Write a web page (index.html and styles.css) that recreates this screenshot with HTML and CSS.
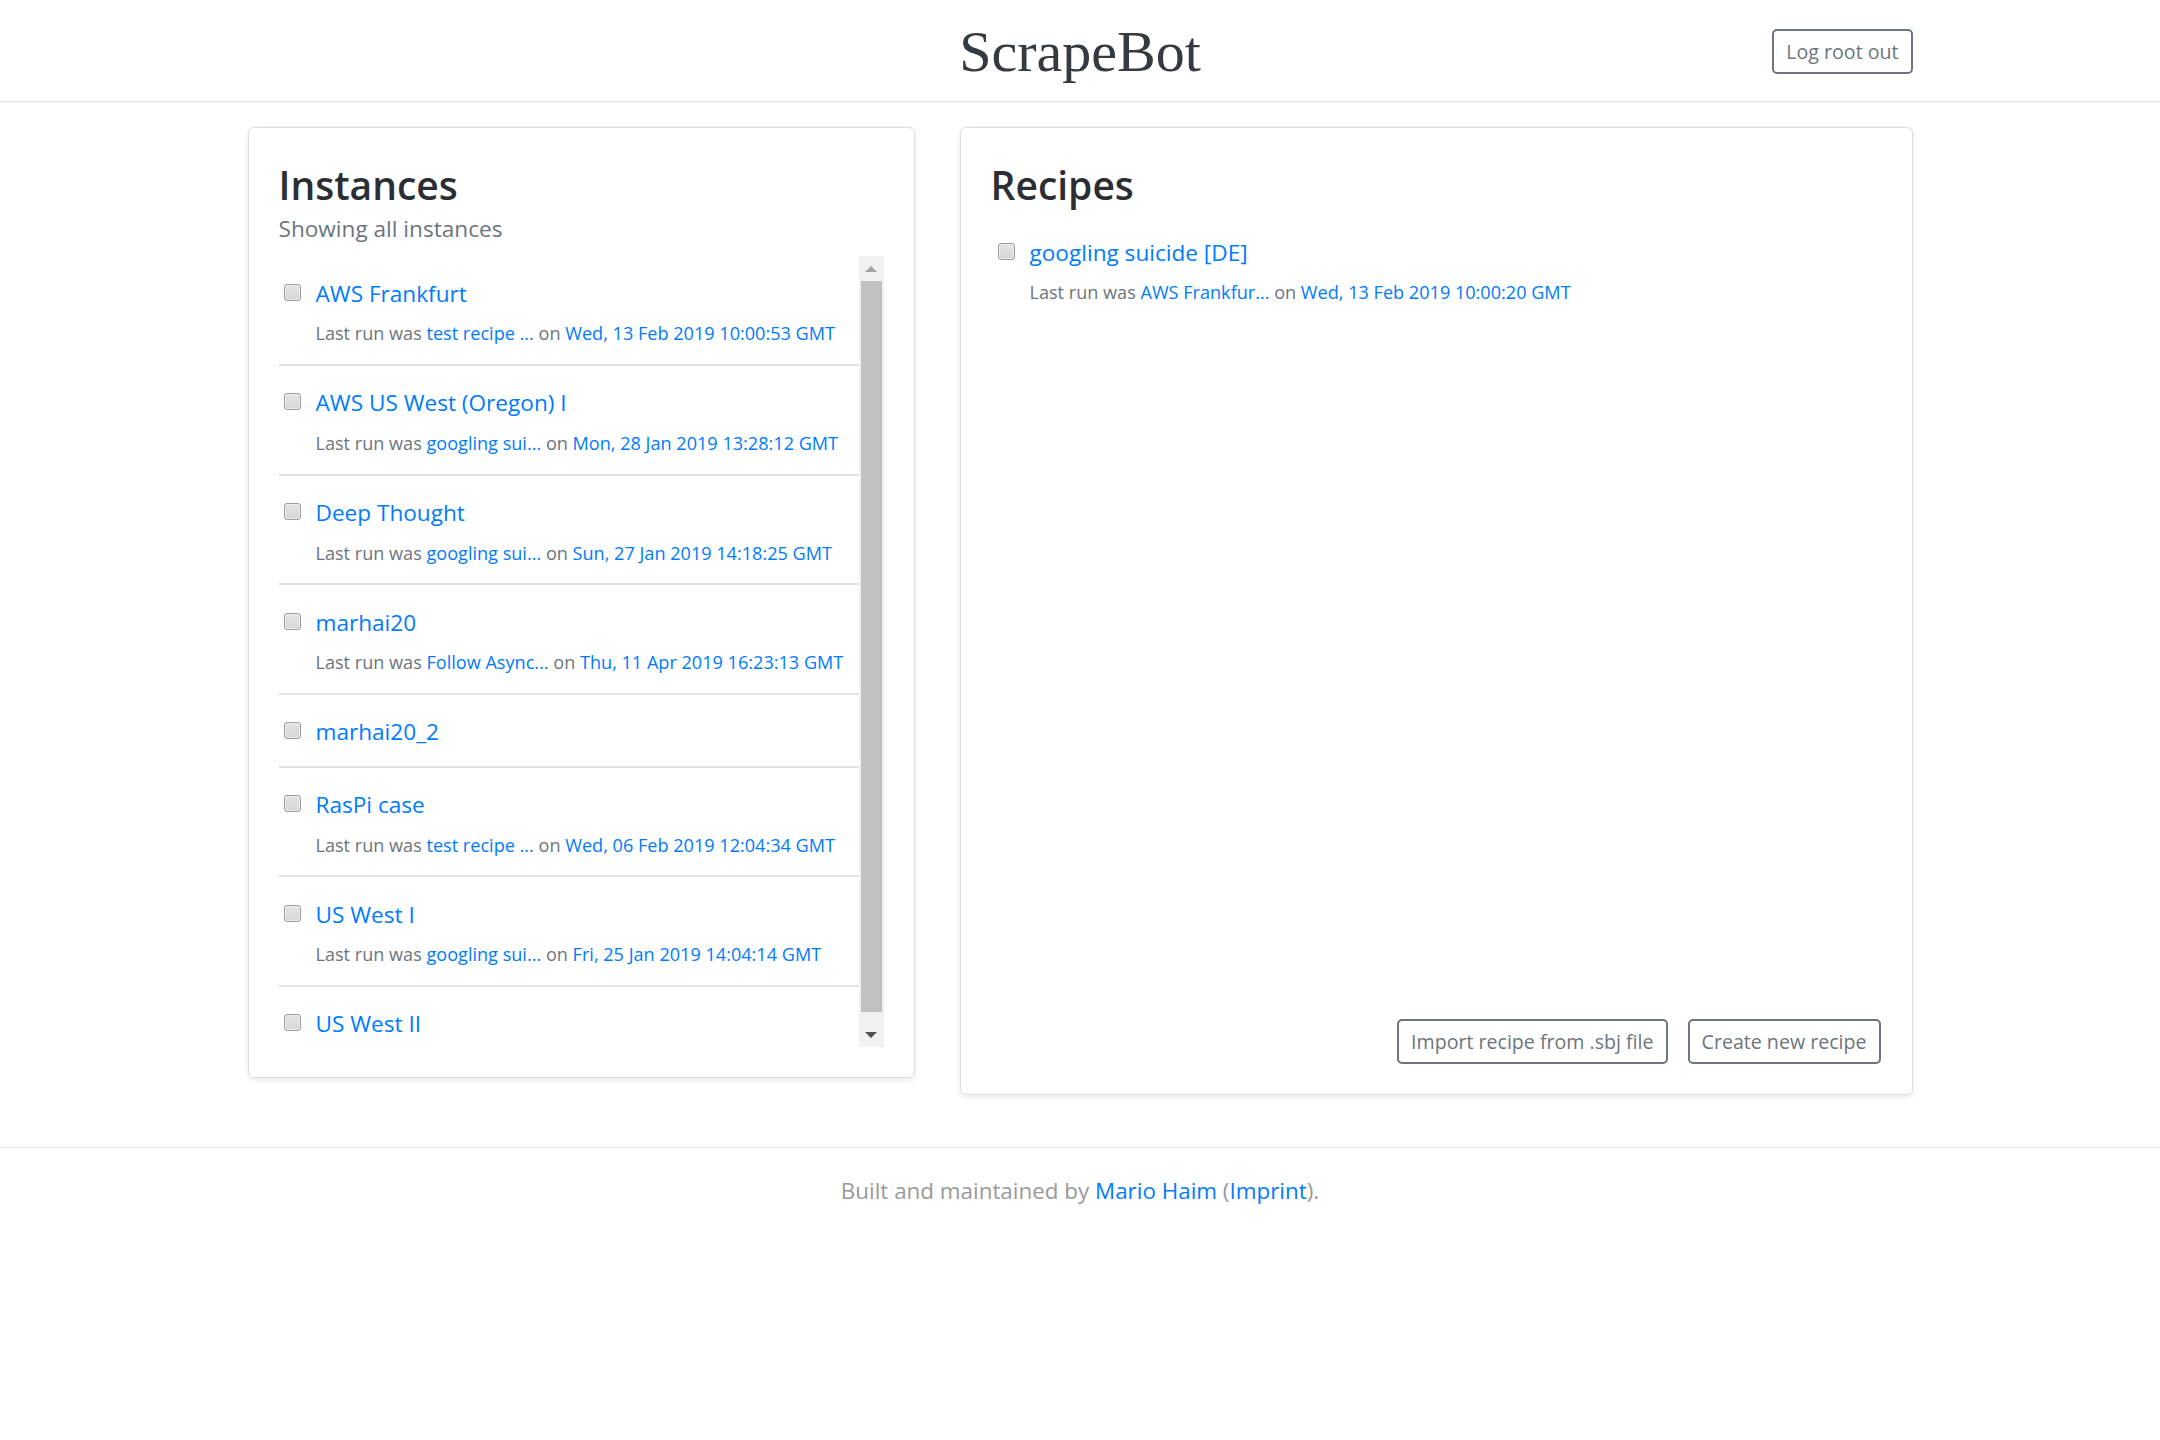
FILE: index.html
```html
<!DOCTYPE html>
<html lang="en">
<head>
<meta charset="utf-8">
<title>ScrapeBot</title>
<link rel="stylesheet" href="styles.css">
</head>
<body>
<header class="topbar">
  <div class="container topbar-inner">
    <div></div>
    <h1 class="brand">ScrapeBot</h1>
    <div class="topbar-actions"><button class="btn">Log root out</button></div>
  </div>
</header>

<main class="container main-grid">
  <section class="card">
    <div class="card-body">
      <h3 class="card-title">Instances</h3>
      <p class="card-subtitle">Showing all instances</p>
      <div class="scroll-box">
        <ul class="item-list">
          <li class="item">
            <input type="checkbox" class="check">
            <div class="item-text">
              <a class="item-title" href="#">AWS Frankfurt</a>
              <div class="item-meta">Last run was <a href="#">test recipe ...</a> on <a href="#">Wed, 13 Feb 2019 10:00:53 GMT</a></div>
            </div>
          </li>
          <li class="item">
            <input type="checkbox" class="check">
            <div class="item-text">
              <a class="item-title" href="#">AWS US West (Oregon) I</a>
              <div class="item-meta">Last run was <a href="#">googling sui...</a> on <a href="#">Mon, 28 Jan 2019 13:28:12 GMT</a></div>
            </div>
          </li>
          <li class="item">
            <input type="checkbox" class="check">
            <div class="item-text">
              <a class="item-title" href="#">Deep Thought</a>
              <div class="item-meta">Last run was <a href="#">googling sui...</a> on <a href="#">Sun, 27 Jan 2019 14:18:25 GMT</a></div>
            </div>
          </li>
          <li class="item">
            <input type="checkbox" class="check">
            <div class="item-text">
              <a class="item-title" href="#">marhai20</a>
              <div class="item-meta">Last run was <a href="#">Follow Async...</a> on <a href="#">Thu, 11 Apr 2019 16:23:13 GMT</a></div>
            </div>
          </li>
          <li class="item">
            <input type="checkbox" class="check">
            <div class="item-text">
              <a class="item-title" href="#">marhai20_2</a>
            </div>
          </li>
          <li class="item">
            <input type="checkbox" class="check">
            <div class="item-text">
              <a class="item-title" href="#">RasPi case</a>
              <div class="item-meta">Last run was <a href="#">test recipe ...</a> on <a href="#">Wed, 06 Feb 2019 12:04:34 GMT</a></div>
            </div>
          </li>
          <li class="item">
            <input type="checkbox" class="check">
            <div class="item-text">
              <a class="item-title" href="#">US West I</a>
              <div class="item-meta">Last run was <a href="#">googling sui...</a> on <a href="#">Fri, 25 Jan 2019 14:04:14 GMT</a></div>
            </div>
          </li>
          <li class="item">
            <input type="checkbox" class="check">
            <div class="item-text">
              <a class="item-title" href="#">US West II</a>
            </div>
          </li>
        </ul>
        <div class="fake-scrollbar" aria-hidden="true">
          <div class="sb-btn"><span class="arrow-up"></span></div>
          <div class="sb-track"><div class="sb-thumb"></div></div>
          <div class="sb-btn"><span class="arrow-down"></span></div>
        </div>
      </div>
    </div>
  </section>

  <section class="card">
    <div class="card-body recipes-body">
      <h3 class="card-title recipes-title">Recipes</h3>
      <ul class="item-list recipe-list">
        <li class="item">
          <input type="checkbox" class="check">
          <div class="item-text">
            <a class="item-title" href="#">googling suicide [DE]</a>
            <div class="item-meta">Last run was <a href="#">AWS Frankfur...</a> on <a href="#">Wed, 13 Feb 2019 10:00:20 GMT</a></div>
          </div>
        </li>
      </ul>
      <div class="card-actions">
        <button class="btn">Import recipe from .sbj file</button>
        <button class="btn">Create new recipe</button>
      </div>
    </div>
  </section>
</main>

<footer class="footer">
  <p>Built and maintained by <a href="#">Mario Haim</a> (<a href="#">Imprint</a>).</p>
</footer>
</body>
</html>
```
FILE: styles.css
```css
* { box-sizing: border-box; }

html, body {
  margin: 0;
  padding: 0;
  background: #fff;
}

body {
  font-family: "Open Sans", "Noto Sans", "Liberation Sans", sans-serif;
  font-size: 22.4px;
  line-height: 36px;
  color: #212529;
}

a {
  color: #007bff;
  text-decoration: none;
}

.container {
  width: 1665px;
  margin: 0 auto;
}

/* ---------- header ---------- */
.topbar {
  border-bottom: 1px solid #e3e3e3;
}

.topbar-inner {
  height: 101px;
  display: grid;
  grid-template-columns: 1fr auto 1fr;
  align-items: center;
}

.brand {
  margin: 0;
  font-family: "Liberation Serif", "Times New Roman", serif;
  font-weight: 400;
  font-size: 58px;
  line-height: 66px;
  color: #343a40;
  padding-top: 2px;
}

.topbar-actions {
  display: flex;
  justify-content: flex-end;
  padding-top: 1px;
}

.btn {
  font-family: "Open Sans", "Noto Sans", "Liberation Sans", sans-serif;
  font-size: 19.6px;
  line-height: 31px;
  padding: 5px 12px;
  color: #6c757d;
  background: #fff;
  border: 2px solid #6c757d;
  border-radius: 5px;
  cursor: pointer;
}

/* ---------- main ---------- */
.main-grid {
  display: grid;
  grid-template-columns: 667px 953px;
  column-gap: 45px;
  align-items: start;
  margin-top: 25px;
}

.card {
  background: #fff;
  border: 1px solid #dedede;
  border-radius: 6px;
  box-shadow: 0 2px 6px rgba(0, 0, 0, 0.09);
}

.card-body {
  padding: 30px;
}

.card-title {
  margin: 0;
  font-size: 39px;
  line-height: 50.4px;
  font-weight: 600;
  color: #2b2f33;
  padding-top: 2px;
  height: 50.4px;
}

.card-subtitle {
  margin: 3px 0 9px;
  font-size: 22.6px;
  line-height: 36px;
  color: #6c757d;
}

.scroll-box {
  display: flex;
  height: 791px;
}

.item-list {
  list-style: none;
  margin: 0;
  padding: 0;
}

.scroll-box .item-list {
  flex: 1;
  overflow: hidden;
  min-width: 0;
}

.item {
  display: flex;
  align-items: flex-start;
  padding: 19.5px 0 15.5px 5px;
  border-bottom: 2px solid #e2e2e2;
}

.item:last-child {
  border-bottom: none;
}

.check {
  -webkit-appearance: none;
  appearance: none;
  flex: none;
  width: 17px;
  height: 17px;
  margin: 8px 15px 0 0;
  border: 1px solid #9c9c9c;
  border-radius: 3px;
  background: linear-gradient(#e4e4e4, #d6d6d6);
  box-shadow: inset 0 0 0 1px #ededed;
}

.item-text {
  min-width: 0;
}

.item-title {
  display: block;
  font-size: 22.6px;
  line-height: 36px;
}

.item-meta {
  margin-top: 7.6px;
  font-size: 18.1px;
  line-height: 29px;
  color: #6c757d;
  white-space: nowrap;
}

/* fake classic scrollbar */
.fake-scrollbar {
  flex: none;
  width: 25px;
  display: flex;
  flex-direction: column;
  background: #f1f1f1;
}

.sb-btn {
  height: 25px;
  display: flex;
  align-items: center;
  justify-content: center;
  flex: none;
}

.sb-track {
  flex: 1;
  padding: 0 2px 10px;
  display: flex;
}

.sb-thumb {
  flex: 1;
  background: #c1c1c1;
}

.arrow-up {
  width: 0;
  height: 0;
  border-left: 6px solid transparent;
  border-right: 6px solid transparent;
  border-bottom: 6px solid #a3a3a3;
}

.arrow-down {
  width: 0;
  height: 0;
  border-left: 6px solid transparent;
  border-right: 6px solid transparent;
  border-top: 6px solid #505050;
}

/* recipes */
.recipes-body {
  display: flex;
  flex-direction: column;
}

.recipes-title {
  margin-bottom: 7px;
}

.recipe-list {
  height: 803.6px;
}

.recipe-list .item {
  padding-left: 7px;
}

.card-actions {
  display: flex;
  justify-content: flex-end;
  gap: 20px;
  padding-right: 1px;
}

/* ---------- footer ---------- */
.footer {
  margin-top: 52px;
  border-top: 1px solid #e5e5e5;
  padding: 25px 0;
  text-align: center;
  color: #999;
}

.footer p {
  margin: 0;
}
```
